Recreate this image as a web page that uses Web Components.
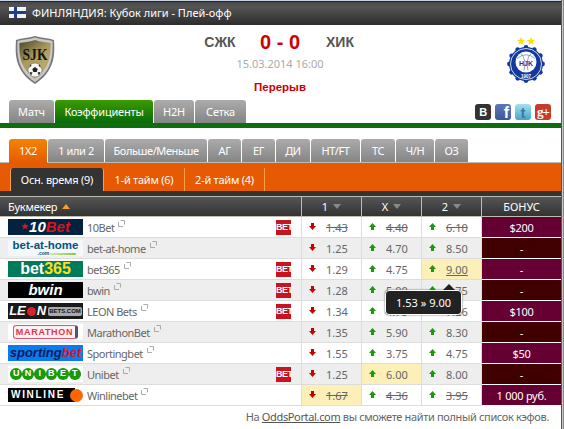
<!DOCTYPE html>
<html>
<head>
<meta charset="utf-8">
<style>
  html, body { margin: 0; padding: 0; background: #fff; overflow: hidden; }
  body { font: 11px "Noto Sans", Arial, sans-serif; color: #666; }
</style>
</head>
<body>
<match-page></match-page>
<script>
class TopBar extends HTMLElement {
    constructor() {
        super();
        this.attachShadow({ mode: 'open' });
        this.shadowRoot.innerHTML = `
            <style>
                :host {
                    display: flex;
                    align-items: center;
                    height: 23px;
                    padding-left: 9px;
                    gap: 6px;
                    color: #fff;
                    border-top: 1px solid #c9d2e4;
                    box-shadow: inset 0 1px 0 #223;
                    background: linear-gradient(#444, #555 25%, #2e2e2e);
                    border-bottom: 1px solid #2e2e2e;
                }
                svg { display: block; }
            </style>
            <svg width="17" height="11" viewBox="0 0 17 11">
                <rect width="17" height="11" fill="#f2f2f6"/>
                <rect x="5" width="3" height="11" fill="#1a3f8f"/>
                <rect y="4" width="17" height="3" fill="#1a3f8f"/>
            </svg>
            <slot></slot>
        `;
    }
}

class SjkCrest extends HTMLElement {
    constructor() {
        super();
        this.attachShadow({ mode: 'open' });
        this.shadowRoot.innerHTML = `
            <style>
                :host { display: block; width: 42px; height: 50px; }
                svg { display: block; }
            </style>
            <svg width="42" height="50" viewBox="0 0 42 50">
                <defs>
                    <linearGradient id="gold" x1="0" y1="0" x2=".6" y2="1">
                        <stop offset="0" stop-color="#45432f"/>
                        <stop offset=".5" stop-color="#a8985a"/>
                        <stop offset="1" stop-color="#c2b272"/>
                    </linearGradient>
                </defs>
                <path d="M21 1 C28 3 34 3 40 5 C41 20 41 36 21 49 C1 36 1 20 2 5 C8 3 14 3 21 1Z" fill="#777"/>
                <path d="M21 2.500 C28 4.500 33 4.500 38.500 6 C39 20 39 35 21 47 C3 35 3 20 3.500 6 C9 4.500 14 4.500 21 2.500Z" fill="#c8c8c8"/>
                <path d="M21 5 C27 7 32 7 36.500 8 C37 20 36 33 21 44 C6 33 5 20 5.500 8 C10 7 15 7 21 5Z" fill="url(#gold)"/>
                <text x="21" y="25" text-anchor="middle" font-family="Liberation Serif" font-weight="700" font-size="16" fill="#14130e" textLength="25" lengthAdjust="spacingAndGlyphs">SJK</text>
                <circle cx="21" cy="35" r="7" fill="#f6f6f6" stroke="#555" stroke-width=".5"/>
                <path d="M21 32 l2.700 2 -1 3 h-3.400 l-1 -3Z M15 33 l2.500 -2.500 -1 -1Z M27 33 l-2.500 -2.500 1 -1Z M17 40.500 l1.500 -3 -3 -.5Z M25 40.500 l-1.500 -3 3 -.5Z" fill="#222"/>
            </svg>
        `;
    }
}

class HjkCrest extends HTMLElement {
    constructor() {
        super();
        this.attachShadow({ mode: 'open' });
        const bumps = [];
        for (let i = 0; i < 12; i++) {
            const a = i * Math.PI / 6;
            bumps.push(`<circle cx="${(19 + 16.5 * Math.cos(a)).toFixed(1)}" cy="${(27 + 16.5 * Math.sin(a)).toFixed(1)}" r="2.400" fill="#14399e"/>`);
        }
        this.shadowRoot.innerHTML = `
            <style>
                :host { display: block; width: 38px; height: 46px; }
                svg { display: block; }
            </style>
            <svg width="38" height="46" viewBox="0 0 38 46">
                <path d="M14 0 l1.100 2.700 2.900.3 -2.200 1.900 .7 2.900 -2.500-1.500 -2.500 1.500 .7-2.900 -2.200-1.900 2.900-.3Z" fill="#ffe000"/>
                <path d="M24 0 l1.100 2.700 2.900.3 -2.200 1.900 .7 2.900 -2.500-1.500 -2.500 1.500 .7-2.900 -2.200-1.900 2.900-.3Z" fill="#ffe000"/>
                ${bumps.join('')}
                <circle cx="19" cy="27" r="17" fill="#14399e"/>
                <circle cx="19" cy="27" r="15.500" fill="none" stroke="#fff" stroke-width=".8"/>
                <circle cx="19" cy="25" r="10.500" fill="#fff"/>
                <path d="M10 21.500 Q19 14 28 21.500 M14 16.500 Q20 23 17 33.500 M24 16.500 Q18 23 21 33.500" fill="none" stroke="#6d86c8" stroke-width=".8"/>
                <text x="19" y="28.500" text-anchor="middle" font-family="Liberation Sans" font-weight="700" font-size="7" fill="#14399e">HJK</text>
                <text x="19" y="40.500" text-anchor="middle" font-family="Liberation Sans" font-weight="700" font-size="4.500" fill="#fff">1907</text>
            </svg>
        `;
    }
}

class MatchScore extends HTMLElement {
    constructor() {
        super();
        this.attachShadow({ mode: 'open' });
        this.shadowRoot.innerHTML = `
            <style>
                :host {
                    display: flex;
                    justify-content: space-between;
                    height: 75px;
                    padding: 0 16px 0 14px;
                }
                .crest-l { margin-top: 10px; }
                .crest-r { margin-top: 12px; }
                .mid {
                    flex: 1;
                    display: flex;
                    flex-direction: column;
                    align-items: center;
                    padding-right: 3px;
                }
                .teams {
                    display: grid;
                    grid-template-columns: 60px 60px 60px;
                    align-items: center;
                    height: 34px;
                    font: bold 14px "Liberation Sans", sans-serif;
                    color: #555;
                    text-align: center;
                }
                .score { font-size: 20px; color: #cc0000; white-space: pre; }
                .date { color: #aaa; margin-top: -4px; line-height: 18px; }
                .status { color: #cc0000; font: bold 11.500px/16px "Liberation Sans", sans-serif; margin-top: 6px; }
            </style>
            <sjk-crest class="crest-l"></sjk-crest>
            <div class="mid">
                <div class="teams"><span>СЖК</span><span class="score">0 - 0</span><span>ХИК</span></div>
                <div class="date">15.03.2014 16:00</div>
                <div class="status">Перерыв</div>
            </div>
            <hjk-crest class="crest-r"></hjk-crest>
        `;
    }
}

class SocialLinks extends HTMLElement {
    constructor() {
        super();
        this.attachShadow({ mode: 'open' });
        this.shadowRoot.innerHTML = `
            <style>
                :host { display: flex; gap: 4px; }
                span {
                    display: flex;
                    align-items: center;
                    justify-content: center;
                    width: 16px;
                    height: 16px;
                    border-radius: 3px;
                    color: #fff;
                    font: bold 11px "Liberation Sans", sans-serif;
                    overflow: hidden;
                }
                .vk { background: #333; }
                .fb { background: linear-gradient(#5a78b4, #3a5a98); font-size: 16px; align-items: flex-end; justify-content: flex-end; padding-right: 2px; box-sizing: border-box; line-height: 15px; }
                .tw { background: linear-gradient(#a4e0f2, #4aa3c8); font-size: 15px; color: #2f7fa6; }
                .gp { background: #c73b2b; font: bold 13px "Liberation Serif", serif; letter-spacing: -1px; }
            </style>
            <span class="vk">В</span><span class="fb">f</span><span class="tw">t</span><span class="gp">g+</span>
        `;
    }
}

class MainTabs extends HTMLElement {
    constructor() {
        super();
        this.attachShadow({ mode: 'open' });
        this.shadowRoot.innerHTML = `
            <style>
                :host {
                    display: flex;
                    align-items: flex-end;
                    height: 23px;
                    padding: 0 10px 0 9px;
                    border-bottom: 5px solid #0d6e0d;
                    letter-spacing: -.2px;
                }
                .tab {
                    display: flex;
                    align-items: center;
                    justify-content: center;
                    height: 23px;
                    margin-right: 1px;
                    box-sizing: border-box;
                    border-radius: 3px 3px 0 0;
                    color: #fff;
                    background: linear-gradient(#ababab, #858585);
                }
                .on { background: linear-gradient(#3a9c00, #0a6a0a); }
                .spacer { flex: 1; }
                social-links { margin-bottom: 3px; }
            </style>
            <div class="tab" style="width:45px">Матч</div>
            <div class="tab on" style="width:98px">Коэффициенты</div>
            <div class="tab" style="width:40px">H2H</div>
            <div class="tab" style="width:51px">Сетка</div>
            <div class="spacer"></div>
            <social-links></social-links>
        `;
    }
}

class MarketTabs extends HTMLElement {
    constructor() {
        super();
        this.attachShadow({ mode: 'open' });
        const tabs = [
            ['1X2', 38, true], ['1 или 2', 56], ['Больше/Меньше', 102], ['АГ', 33], ['ЕГ', 33],
            ['ДИ', 34], ['HT/FT', 49], ['ТС', 34], ['Ч/Н', 38], ['ОЗ', 33]
        ];
        this.shadowRoot.innerHTML = `
            <style>
                :host {
                    display: flex;
                    height: 23px;
                    margin-top: 11px;
                    padding-left: 9px;
                    gap: 1px;
                    border-bottom: 1px solid #bdbdb0;
                    letter-spacing: -.4px;
                }
                div {
                    display: flex;
                    align-items: center;
                    justify-content: center;
                    border-radius: 3px 3px 0 0;
                    color: #fff;
                    background: linear-gradient(#ababab, #858585);
                }
                .on { background: linear-gradient(#f58400, #e65a03); height: 24px; padding-bottom: 1px; box-sizing: border-box; }
            </style>
            ${tabs.map(t => `<div class="${t[2] ? 'on' : ''}" style="width:${t[1]}px">${t[0]}</div>`).join('')}
        `;
    }
}

class PeriodTabs extends HTMLElement {
    constructor() {
        super();
        this.attachShadow({ mode: 'open' });
        this.shadowRoot.innerHTML = `
            <style>
                :host {
                    display: flex;
                    align-items: flex-end;
                    height: 28px;
                    padding-left: 10px;
                    background: #e65a03;
                    border-bottom: 5px solid #333;
                    letter-spacing: -.25px;
                }
                div {
                    display: flex;
                    align-items: center;
                    justify-content: center;
                    height: 23px;
                    box-sizing: border-box;
                    color: #fff;
                    border-right: 1px solid #f5a04c;
                }
                .on { background: #333; border-radius: 3px 3px 0 0; border-left: 1px solid #f5a04c; }
            </style>
            <div class="on" style="width:94px">Осн. время (9)</div>
            <div style="width:81px">1-й тайм (6)</div>
            <div style="width:80px">2-й тайм (4)</div>
        `;
    }
}

class BookLogo extends HTMLElement {
    constructor() {
        super();
        this.attachShadow({ mode: 'open' });
    }

    connectedCallback() {
        const parts = {
            tenbet: `<span class="star">★</span><i class="w">10</i><i class="r">Bet</i>`,
            bah: `<b class="blue">bet-at-home</b><span class="swoosh"><b>.com</b><span class="green"></span></span>`,
            b365: `<b class="w">bet</b><b class="y">365</b>`,
            bwin: `<i class="w">bwin</i>`,
            leon: `<i class="w">LE</i><em></em><i class="w">N</i><u>BETS.COM</u>`,
            marathon: `<span class="mar">MARATHON</span>`,
            sporting: `<i class="navy">sporting</i><i class="r2">bet</i>`,
            unibet: `${['U','N','I','B','E','T'].map(c => `<s>${c}</s>`).join('')}`,
            winline: `<span class="win">WINLINE</span><em class="orange"></em>`
        };
        this.shadowRoot.innerHTML = `
            <style>
                :host {
                    display: flex;
                    flex: none;
                    align-items: center;
                    justify-content: center;
                    position: relative;
                    width: 75px;
                    height: 16px;
                    overflow: hidden;
                    font: bold 15px/16px "Liberation Sans", sans-serif;
                }
                :host([kind=tenbet]) { background: #03223f; }
                :host([kind=bah]) { background: #f4f8fa; flex-direction: column; overflow: visible; }
                :host([kind=b365]) { background: #027b5b; font-size: 16px; }
                :host([kind=bwin]) { background: #000; font-size: 15px; }
                :host([kind=leon]) { background: #1a1a1a; font-size: 13px; }
                :host([kind=marathon]) { background: #fff; }
                :host([kind=sporting]) { background: #0a7cf0; font-size: 13px; }
                :host([kind=unibet]) { background: #fff; }
                :host([kind=winline]) { background: linear-gradient(90deg, #000 90%, #fff 90%); height: 14px; justify-content: flex-start; padding-left: 3px; box-sizing: border-box; }
                i { font-style: italic; font-weight: bold; }
                .star { color: #e0141e; font-size: 8px; margin-right: 1px; }
                .w { color: #fff; }
                .r, .r2 { color: #d8141e; }
                .y { color: #ffdf1b; }
                .navy { color: #0b1a5e; }
                .blue { display: block; color: #04517f; font-size: 11.500px; line-height: 11px; }
                .swoosh { display: flex; align-items: center; gap: 1px; width: 60px; font-size: 5px; line-height: 5px; color: #04517f; padding-left: 22px; box-sizing: border-box; }
                .green { flex: 1; height: 2px; background: linear-gradient(90deg, #cde8a0, #8cc63f); border-radius: 1px; }
                em { display: block; flex: none; width: 9px; height: 9px; margin: 0 1px; border-radius: 50%; background: #d8232a; }
                u { text-decoration: none; font-size: 6px; line-height: 9px; color: #111; background: #aaa; padding: 0 1px; margin-left: 2px; border-radius: 2px; }
                .mar {
                    display: block;
                    box-sizing: border-box;
                    width: 65px;
                    color: #e0364e;
                    background: #fff0f2;
                    border: 1px solid #e0566e;
                    border-right: 3px solid #556;
                    border-radius: 3px;
                    font-size: 9px;
                    line-height: 12px;
                    letter-spacing: .7px;
                    text-align: center;
                }
                s {
                    display: block;
                    flex: none;
                    width: 11.700px;
                    height: 11.700px;
                    border-radius: 50%;
                    background: #1a9a0a;
                    color: #fff;
                    font-size: 9px;
                    line-height: 11.700px;
                    text-align: center;
                    text-decoration: none;
                }
                .win { color: #fff; font-size: 10px; letter-spacing: 1.700px; }
                .orange { position: absolute; left: 62px; top: .5px; width: 13px; height: 13px; margin: 0; background: #f60; }
            </style>
            ${parts[this.getAttribute('kind')]}
        `;
    }
}

class OddCell extends HTMLElement {
    constructor() {
        super();
        this.attachShadow({ mode: 'open' });
    }

    connectedCallback() {
        const up = this.getAttribute('dir') === 'up';
        this.shadowRoot.innerHTML = `
            <style>
                :host {
                    display: flex;
                    align-items: center;
                    padding-left: 7px;
                    gap: 10px;
                    border-right: 1px solid #ddd;
                }
                :host([hl]) { background: #fcf0b8; }
                svg { display: block; margin-top: -1px; }
                span { display: block; }
                :host([old]) span { text-decoration: line-through; }
                :host([under]) span { text-decoration: underline; }
            </style>
            <svg width="7" height="7" viewBox="0 0 7 7">
                <path d="${up ? 'M3.500 0 L7 4 H5 V7 H2 V4 H0Z' : 'M3.500 7 L7 3 H5 V0 H2 V3 H0Z'}" fill="${up ? '#1a9a0a' : '#c80000'}"/>
            </svg>
            <span><slot></slot></span>
        `;
    }
}

class OddsRow extends HTMLElement {
    constructor() {
        super();
        this.attachShadow({ mode: 'open' });
    }

    connectedCallback() {
        const d = JSON.parse(this.getAttribute('data'));
        const even = this.hasAttribute('even');
        this.shadowRoot.innerHTML = `
            <style>
                :host {
                    display: grid;
                    grid-template-columns: 302px 60px 60px 60px 79px;
                    height: 21px;
                    box-sizing: border-box;
                    border-bottom: 1px solid #ddd;
                    background: ${even ? '#eee' : '#fff'};
                }
                .book {
                    display: flex;
                    align-items: center;
                    padding-left: 8px;
                    border-right: 1px solid #ddd;
                    box-sizing: border-box;
                }
                .name { margin-left: 4px; letter-spacing: -.5px; }
                .ext { margin: -7px 0 0 4px; display: block; }
                .bet {
                    margin-left: auto;
                    margin-right: 10px;
                    width: 15px;
                    height: 15px;
                    background: #c8141e;
                    color: #fff;
                    font: bold 9px/15px "Liberation Sans", sans-serif;
                    letter-spacing: -.5px;
                    text-align: center;
                }
                .bonus {
                    display: flex;
                    align-items: center;
                    justify-content: center;
                    color: #fff;
                    letter-spacing: -.25px;
                    background: ${even ? '#400000' : '#660033'};
                    box-shadow: 0 1px 0 #fff;
                }
            </style>
            <div class="book">
                <book-logo kind="${d.logo}"></book-logo>
                <span class="name">${d.name}</span>
                <svg class="ext" width="7" height="7" viewBox="0 0 7 7"><path d="M.5 2V6.500H5M2.500 .5H6.500V4.500" fill="none" stroke="#aaa"/></svg>
                ${d.bet ? '<span class="bet">BET</span>' : ''}
            </div>
            ${d.odds.map((o, i) => `<odd-cell dir="${i === 0 ? 'down' : 'up'}" ${d.old ? 'old' : ''} ${d.hl === i ? 'hl' : ''} ${d.under === i ? 'under' : ''}>${o}</odd-cell>`).join('')}
            <div class="bonus">${d.bonus}</div>
        `;
    }
}

class OddsTable extends HTMLElement {
    constructor() {
        super();
        this.attachShadow({ mode: 'open' });
        this.rows = [
            { logo: 'tenbet', name: '10Bet', bet: 1, old: 1, odds: ['1.43', '4.40', '6.10'], bonus: '$200' },
            { logo: 'bah', name: 'bet-at-home', odds: ['1.25', '4.70', '8.50'], bonus: '-' },
            { logo: 'b365', name: 'bet365', bet: 1, hl: 2, under: 2, odds: ['1.29', '4.75', '9.00'], bonus: '-' },
            { logo: 'bwin', name: 'bwin', bet: 1, odds: ['1.28', '5.00', '8.75'], bonus: '-' },
            { logo: 'leon', name: 'LEON Bets', bet: 1, odds: ['1.34', '4.75', '7.26'], bonus: '$100' },
            { logo: 'marathon', name: 'MarathonBet', odds: ['1.35', '5.90', '8.30'], bonus: '-' },
            { logo: 'sporting', name: 'Sportingbet', odds: ['1.55', '3.75', '4.75'], bonus: '$50' },
            { logo: 'unibet', name: 'Unibet', bet: 1, hl: 1, odds: ['1.25', '6.00', '8.00'], bonus: '-' },
            { logo: 'winline', name: 'Winlinebet', old: 1, hl: 0, odds: ['1.67', '4.36', '3.95'], bonus: '1 000 руб.' }
        ];
        this.shadowRoot.innerHTML = `
            <style>
                :host { display: block; position: relative; }
                .head {
                    display: grid;
                    grid-template-columns: 302px 60px 60px 60px 79px;
                    height: 21px;
                    box-sizing: border-box;
                    border-top: 1px solid #bdbdb0;
                    border-bottom: 1px solid #bdbdb0;
                    background: linear-gradient(#555, #333);
                    color: #fff;
                }
                .head div {
                    display: flex;
                    align-items: center;
                    justify-content: center;
                    gap: 5px;
                    border-right: 1px solid #bdbdb0;
                }
                .head div:first-child { justify-content: flex-start; padding-left: 8px; letter-spacing: -.2px; }
                .head div:last-child { border-right: 0; }
                .tri { width: 0; height: 0; border: 4px solid transparent; border-top: 5px solid #888; border-bottom: 0; }
                .tri.asc { border-top: 0; border-bottom: 5px solid #f7a11a; }
                .tip {
                    position: absolute;
                    left: 385px;
                    top: 94px;
                    width: 77px;
                    height: 25px;
                    box-sizing: border-box;
                    display: flex;
                    align-items: center;
                    justify-content: center;
                    background: #222;
                    color: #fff;
                    border: 1px solid #fff;
                    border-radius: 4px;
                    box-shadow: 0 0 2px #555;
                }
                .tip::before {
                    content: "";
                    position: absolute;
                    left: 57px;
                    top: -7px;
                    border: 6px solid transparent;
                    border-top: 0;
                    border-bottom: 6px solid #222;
                }
            </style>
            <div class="head">
                <div>Букмекер<span class="tri asc"></span></div>
                <div>1<span class="tri"></span></div>
                <div>X<span class="tri"></span></div>
                <div>2<span class="tri"></span></div>
                <div>БОНУС</div>
            </div>
            ${this.rows.map((r, i) => `<odds-row ${i % 2 ? 'even' : ''} data='${JSON.stringify(r)}'></odds-row>`).join('')}
            <div class="tip">1.53 » 9.00</div>
        `;
    }
}

class MatchPage extends HTMLElement {
    constructor() {
        super();
        this.attachShadow({ mode: 'open' });
        this.shadowRoot.innerHTML = `
            <style>
                :host {
                    display: flex;
                    width: 564px;
                    height: 429px;
                    overflow: hidden;
                    font: 11px "Noto Sans", Arial, sans-serif;
                    color: #666;
                }
                .content { width: 561px; flex: none; }
                .edge { flex: 1; background: linear-gradient(90deg, #555 33%, #c8c8c8 33% 66%, #888 66%); }
                .foot {
                    margin-top: 3px;
                    padding-right: 12px;
                    text-align: right;
                    line-height: 15px;
                    letter-spacing: -.35px;
                }
                .foot a { color: #555; text-decoration: underline; }
            </style>
            <div class="content">
                <top-bar>ФИНЛЯНДИЯ: Кубок лиги - Плей-офф</top-bar>
                <match-score></match-score>
                <main-tabs></main-tabs>
                <market-tabs></market-tabs>
                <period-tabs></period-tabs>
                <odds-table></odds-table>
                <div class="foot">На <a>OddsPortal.com</a> вы сможете найти полный список кэфов.</div>
            </div>
            <div class="edge"></div>
        `;
    }
}

customElements.define('top-bar', TopBar);
customElements.define('sjk-crest', SjkCrest);
customElements.define('hjk-crest', HjkCrest);
customElements.define('match-score', MatchScore);
customElements.define('social-links', SocialLinks);
customElements.define('main-tabs', MainTabs);
customElements.define('market-tabs', MarketTabs);
customElements.define('period-tabs', PeriodTabs);
customElements.define('book-logo', BookLogo);
customElements.define('odd-cell', OddCell);
customElements.define('odds-row', OddsRow);
customElements.define('odds-table', OddsTable);
customElements.define('match-page', MatchPage);
</script>
</body>
</html>
